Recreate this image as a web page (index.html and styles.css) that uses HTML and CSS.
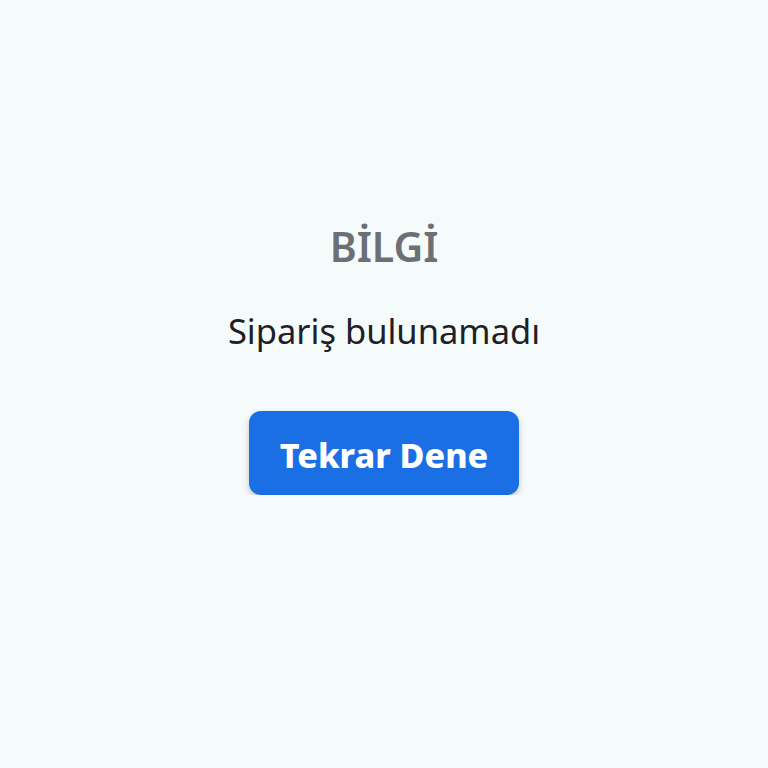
FILE: index.html
```html
<!DOCTYPE html>
<html lang="tr">
<head>
<meta charset="utf-8">
<link rel="stylesheet" href="styles.css">
</head>
<body>
<main class="page">
  <h1 class="title">BİLGİ</h1>
  <p class="message">Sipariş bulunamadı</p>
  <button class="retry">Tekrar Dene</button>
</main>
</body>
</html>
```
FILE: styles.css
```css
html, body {
  margin: 0;
  padding: 0;
  background: #f5fafb;
}
.page {
  display: flex;
  flex-direction: column;
  align-items: center;
  padding-top: 222px;
  font-family: "Noto Sans", "Open Sans", sans-serif;
}
.title {
  margin: 0;
  font-size: 41px;
  line-height: 48px;
  font-weight: 600;
  color: #6c6f73;
}
.message {
  margin: 38px 0 0;
  font-size: 34.5px;
  line-height: 46px;
  font-weight: 400;
  color: #1d2126;
}
.retry {
  margin-top: 57px;
  width: 270px;
  height: 84px;
  padding: 4px 0 0;
  border: none;
  border-radius: 12px;
  background: #1b6fe5;
  color: #ffffff;
  font-family: "Noto Sans", "Open Sans", sans-serif;
  font-size: 34px;
  font-weight: 800;
  box-shadow: 0 3px 6px rgba(0, 0, 0, 0.22);
}
```
